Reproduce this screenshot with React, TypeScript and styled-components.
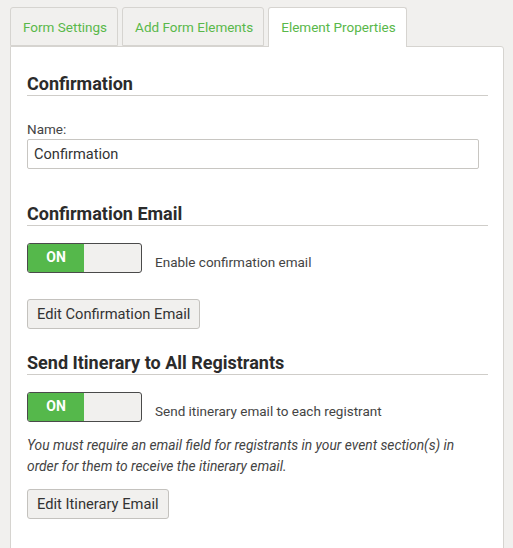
import React from "react";
import styled, { createGlobalStyle } from "styled-components";

const Global = createGlobalStyle`
  html, body { margin: 0; padding: 0; background: #f1f0ee; overflow: hidden; }
  body { font-family: Roboto, "Liberation Sans", Arial, sans-serif; color: #333; }
  * { box-sizing: border-box; }
`;

const Page = styled.div`
  padding: 7px 9px 0 10px;
  height: 570px;
  display: flex;
  flex-direction: column;
`;

const TabBar = styled.div`
  display: flex;
  gap: 4px;
  position: relative;
  z-index: 1;
`;

const Tab = styled.div<{ $active?: boolean }>`
  height: ${(p) => (p.$active ? "40px" : "39px")};
  margin-bottom: ${(p) => (p.$active ? "-1px" : "0")};
  padding: 0 10px 0 12px;
  display: flex;
  align-items: center;
  font-size: 13.5px;
  color: #59b84a;
  background: ${(p) => (p.$active ? "#fff" : "#f1f0ee")};
  border: 1px solid #d6d4d0;
  border-bottom: ${(p) => (p.$active ? "none" : "1px solid #d6d4d0")};
  border-radius: 3px 3px 0 0;
  padding-bottom: ${(p) => (p.$active ? "1px" : "0")};
`;

const Panel = styled.div`
  flex: 1;
  width: 494px;
  background: #fff;
  border: 1px solid #d6d4d0;
  border-radius: 0 3px 0 0;
  padding: 26px 15px 0 16px;
  display: flex;
  flex-direction: column;
`;

const Heading = styled.h2<{ $top?: number }>`
  margin: ${(p) => p.$top ?? 0}px 0 0 0;
  font-size: 18px;
  line-height: 21px;
  font-weight: 700;
  color: #2b2b2b;
  padding-bottom: 1px;
  border-bottom: 1px solid #cfcdc9;
`;

const Label = styled.label`
  display: block;
  margin-top: 24px;
  font-size: 13.5px;
  line-height: 19px;
  color: #444;
`;

const TextInput = styled.input`
  display: block;
  width: 452px;
  height: 30px;
  border: 1px solid #c8c6c2;
  border-radius: 2px;
  padding: 0 6px;
  font-family: inherit;
  font-size: 14.6px;
  color: #333;
  outline: none;
`;

const ToggleRow = styled.div`
  display: flex;
  align-items: center;
  gap: 13px;
  margin-top: 17px;
`;

const Toggle = styled.div`
  width: 115px;
  height: 30px;
  border: 1px solid #4a4a4a;
  border-radius: 3px;
  overflow: hidden;
  display: flex;
  background: #f1f0ee;
  flex-shrink: 0;
`;

const ToggleOn = styled.span`
  width: 56px;
  background: #55b84b;
  color: #fff;
  font-size: 14px;
  font-weight: 700;
  display: flex;
  align-items: center;
  justify-content: center;
  padding-bottom: 3px;
`;

const ToggleLabel = styled.span`
  font-size: 13.5px;
  color: #444;
  padding-top: 7px;
`;

const Button = styled.button<{ $top: number }>`
  align-self: flex-start;
  margin-top: ${(p) => p.$top}px;
  height: 30px;
  padding: 0 9px;
  background: #f1f0ee;
  border: 1px solid #c4c2be;
  border-radius: 3px;
  font-family: inherit;
  font-size: 14.7px;
  color: #333;
`;

const Note = styled.p`
  margin: 13px 0 0 0;
  font-size: 13.8px;
  line-height: 21px;
  font-style: italic;
  color: #444;
  padding-right: 10px;
`;

export default function App() {
  return (
    <>
      <Global />
      <Page>
        <TabBar>
          <Tab>Form Settings</Tab>
          <Tab>Add Form Elements</Tab>
          <Tab $active>Element Properties</Tab>
        </TabBar>
        <Panel>
          <Heading>Confirmation</Heading>
          <Label>Name:</Label>
          <TextInput defaultValue="Confirmation" />
          <Heading $top={34}>Confirmation Email</Heading>
          <ToggleRow>
            <Toggle>
              <ToggleOn>ON</ToggleOn>
            </Toggle>
            <ToggleLabel>Enable confirmation email</ToggleLabel>
          </ToggleRow>
          <Button $top={26}>Edit Confirmation Email</Button>
          <Heading $top={23}>Send Itinerary to All Registrants</Heading>
          <ToggleRow>
            <Toggle>
              <ToggleOn>ON</ToggleOn>
            </Toggle>
            <ToggleLabel>Send itinerary email to each registrant</ToggleLabel>
          </ToggleRow>
          <Note>
            You must require an email field for registrants in your event section(s) in order for them to receive the itinerary email.
          </Note>
          <Button $top={12}>Edit Itinerary Email</Button>
        </Panel>
      </Page>
    </>
  );
}
